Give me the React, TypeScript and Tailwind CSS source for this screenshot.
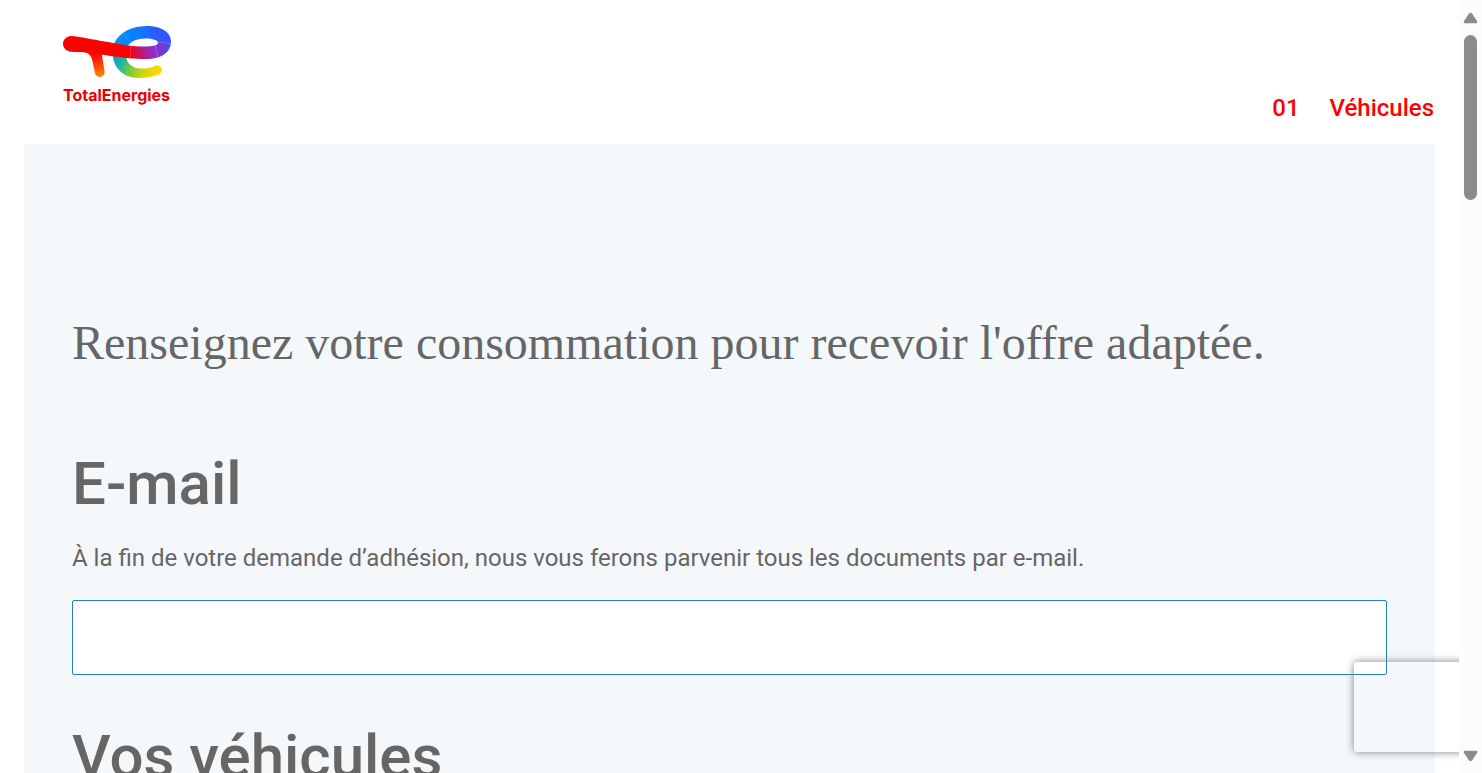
import React from "react";

function Logo() {
  return (
    <a href="#" aria-label="TotalEnergies" className="flex w-[112px] flex-col items-start">
      <svg viewBox="63 26 109 52" className="h-[52px] w-[109px]" aria-hidden="true">
        <defs>
          <linearGradient id="top" gradientUnits="userSpaceOnUse" x1="113" y1="50" x2="171" y2="40">
            <stop offset="0" stopColor="#009be0" />
            <stop offset="0.25" stopColor="#0087fa" />
            <stop offset="0.5" stopColor="#1479ff" />
            <stop offset="0.8" stopColor="#3156ff" />
            <stop offset="1" stopColor="#3355ff" />
          </linearGradient>
          <linearGradient id="bar" gradientUnits="userSpaceOnUse" x1="130" y1="56" x2="170" y2="43">
            <stop offset="0" stopColor="#f0001e" />
            <stop offset="0.2" stopColor="#cd1050" />
            <stop offset="0.55" stopColor="#8f30c8" />
            <stop offset="0.8" stopColor="#7038d8" />
            <stop offset="1" stopColor="#3c50ff" />
          </linearGradient>
          <linearGradient id="bottom" gradientUnits="userSpaceOnUse" x1="114" y1="54" x2="156" y2="74">
            <stop offset="0" stopColor="#0098e8" />
            <stop offset="0.22" stopColor="#1bb8a0" />
            <stop offset="0.5" stopColor="#87cb32" />
            <stop offset="0.75" stopColor="#d2d70a" />
            <stop offset="1" stopColor="#ffd500" />
          </linearGradient>
          <linearGradient id="stem" gradientUnits="userSpaceOnUse" x1="96" y1="53" x2="100" y2="77">
            <stop offset="0" stopColor="#ff0000" />
            <stop offset="0.3" stopColor="#ff2300" />
            <stop offset="1" stopColor="#ff8c00" />
          </linearGradient>
        </defs>
        <path fill="url(#bottom)" d="M112.6 50C111.5 66 122 78 138.5 78C147 78 154 76.5 159.3 74.3C162.3 72.8 162.6 69.5 160.8 67.3C159.5 65.6 157.3 65.1 155 65.9C150 67.8 145.5 68.7 140.5 68.5C132 68 126.5 63.5 126.5 57L126.5 50Z" />
        <path fill="url(#top)" d="M112.6 52C112.6 37 127 26 147 26C162 26 171 33 171 41.2L158 43C158.2 40 152.5 38.4 145.5 38.4C137 38.4 130.5 41.5 127.5 46L126.5 52Z" />
        <path fill="url(#bar)" d="M171 40.5C171.5 52 162 59 146 59C140 59 134 58.7 129 58.2L130 45.7C136 46.5 143 46.7 150 46.2C155 45.8 158 44.8 158 42.4Z" />
        <path fill="#ff0000" d="M71 36C75 35.8 100 41 130.8 45.8L130 58.3C119 57.3 110 56 100 54.3L88 53C83 51.7 76 52.6 71 51.8C66 51.2 63 47.7 63 43.8C63 39.7 66.5 36.2 71 36Z" />
        <path fill="url(#stem)" d="M80 51C86 51.5 90.5 54 92 59L95 73.2C95.8 76 98 77.3 100.6 76.9C103.5 76.4 105 74 104.5 71L101.8 54.3L90 51Z" />
        <path stroke="#fff" strokeOpacity="0.4" strokeWidth="0.5" d="M123.5 34L129 40.5M157.5 42L171 43.5M155 45.5L158 57.5M130.8 46L130 58" />
      </svg>
      <span className="mt-[7px] font-[Inter,sans-serif] text-base leading-5 font-bold text-[#ed0000]">TotalEnergies</span>
    </a>
  );
}

function Scrollbar() {
  return (
    <div aria-hidden="true" className="flex w-[23px] shrink-0 flex-col items-center bg-[#fcfcfc] pt-3 pb-[11px]">
      <svg viewBox="0 0 15 12" className="h-3 w-[15px] shrink-0">
        <path fill="#8b8b8b" d="M6 1.6Q7.5 0 9 1.6L14 9Q15 11.2 13 11.2H2Q0 11.2 1 9Z" />
      </svg>
      <div className="mt-[11px] h-[165px] w-[13px] rounded-full bg-[#8b8b8b]" />
      <svg viewBox="0 0 15 12" className="mt-auto h-3 w-[15px] shrink-0">
        <path fill="#8b8b8b" d="M6 10.4Q7.5 12 9 10.4L14 3Q15 .8 13 .8H2Q0 .8 1 3Z" />
      </svg>
    </div>
  );
}

export default function App() {
  return (
    <div className="flex h-screen overflow-hidden bg-white font-[Roboto,sans-serif] text-[#666666]">
      <div className="relative min-w-0 flex-1 overflow-hidden px-6">
        <header className="flex h-36 items-start justify-between pt-[26px] pr-px pl-[39px]">
          <Logo />
          <nav className="mt-16 flex gap-[30px] text-2xl leading-9 font-medium text-[#ff0000]">
            <span>01</span>
            <a href="#vehicules">Véhicules</a>
          </nav>
        </header>
        <main className="bg-[#f4f8fb] px-12 pt-[163px] pb-12">
          <h1 className="font-['Liberation_Serif',serif] text-5xl leading-[72px]">
            Renseignez votre consommation pour recevoir l'offre adaptée.
          </h1>
          <form>
            <h2 className="mt-[69px] text-[60px] leading-[72px] font-medium">
              <label htmlFor="email">E-mail</label>
            </h2>
            <p className="mt-5 text-2xl leading-9">
              À la fin de votre demande d’adhésion, nous vous ferons parvenir tous les documents par e-mail.
            </p>
            <input
              id="email"
              type="email"
              className="mt-6 block h-[75px] w-full rounded-xs border border-[#2780bd] bg-white px-6 text-2xl outline-none"
            />
            <h2 id="vehicules" className="mt-[46px] text-[60px] leading-[72px] font-medium">Vos véhicules</h2>
          </form>
        </main>
        <div
          aria-hidden="true"
          className="absolute -right-72 bottom-[21px] h-[90px] w-[393px] rounded-[3px] shadow-[0_0_8px_gray]"
        />
      </div>
      <Scrollbar />
    </div>
  );
}
